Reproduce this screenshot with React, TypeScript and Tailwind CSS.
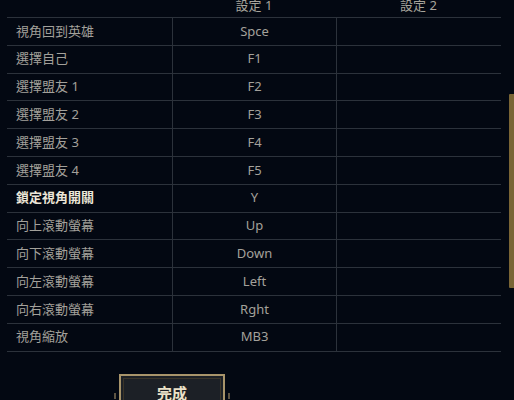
import React from "react";

const rows: { label: string; key1: string; bold?: boolean }[] = [
  { label: "視角回到英雄", key1: "Spce" },
  { label: "選擇自己", key1: "F1" },
  { label: "選擇盟友 1", key1: "F2" },
  { label: "選擇盟友 2", key1: "F3" },
  { label: "選擇盟友 3", key1: "F4" },
  { label: "選擇盟友 4", key1: "F5" },
  { label: "鎖定視角開關", key1: "Y", bold: true },
  { label: "向上滾動螢幕", key1: "Up" },
  { label: "向下滾動螢幕", key1: "Down" },
  { label: "向左滾動螢幕", key1: "Left" },
  { label: "向右滾動螢幕", key1: "Rght" },
  { label: "視角縮放", key1: "MB3" },
];

export default function App() {
  return (
    <div
      className="relative w-[514px] h-[400px] overflow-hidden bg-[#030812] text-[13px] text-[#a3a19b]"
      style={{ fontFamily: '"Noto Sans", "Noto Sans CJK TC", sans-serif' }}
    >
      <div className="-mt-[6px] ml-[7px] w-[494px]">
        {/* header */}
        <div className="grid grid-cols-[165px_164px_165px] h-[24px] border-b border-[#2c323b] items-center">
          <div />
          <div className="text-center leading-[13px] text-[#a8a59c]">設定 1</div>
          <div className="text-center leading-[13px] text-[#a8a59c]">設定 2</div>
        </div>

        {rows.map((r) => (
          <div
            key={r.label}
            className="grid grid-cols-[165px_164px_165px] h-[27.8px] border-b border-[#2c323b]"
          >
            <div
              className={
                r.bold
                  ? "flex items-center pl-[9px] font-bold text-[#ece6d8]"
                  : "flex items-center pl-[9px]"
              }
            >
              {r.label}
            </div>
            <div className="flex items-center justify-center border-l border-[#2c323b]">
              {r.key1}
            </div>
            <div className="border-l border-[#2c323b]" />
          </div>
        ))}

        {/* done button */}
        <div className="mt-[22px] ml-[107px] flex items-start">
          <span className="mt-[19px] mr-[3px] w-[2px] h-[6px] bg-[#5e5442]" />
          <button className="w-[106px] h-[34px] border-2 border-[#a8946a] bg-[#1c2026] p-[2px]">
            <div className="w-full h-full border border-[#3a3428] flex items-start justify-center pt-[5px] text-[15px] font-bold text-[#ebe2c8] leading-[18px]">
              完成
            </div>
          </button>
          <span className="mt-[19px] ml-[3px] w-[2px] h-[6px] bg-[#5e5442]" />
        </div>
      </div>

      {/* scrollbar thumb */}
      <div className="absolute left-[509px] top-[94px] w-[5px] h-[194px] bg-[#7a6535] rounded-l-[1px]" />
    </div>
  );
}
